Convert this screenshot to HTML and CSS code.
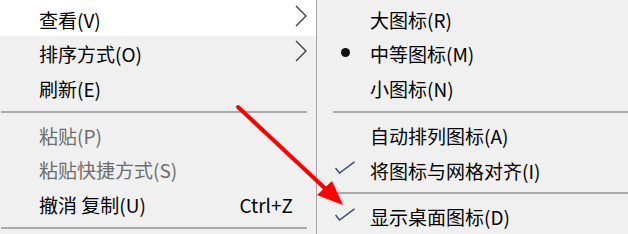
FILE: index.html
```html
<!DOCTYPE html>
<html lang="zh-CN">
<head>
<meta charset="utf-8">
<title>右键菜单</title>
<link rel="stylesheet" href="styles.css">
</head>
<body>
<div class="wrap">
  <div class="menu left">
    <div class="item first"><span class="label">查看(V)</span><svg class="chev" width="12" height="22" viewBox="0 0 12 22"><polyline points="1,1 11,11 1,21" fill="none" stroke="#3a3f4a" stroke-width="1.4"/></svg></div>
    <div class="item"><span class="label">排序方式(O)</span><svg class="chev" width="12" height="22" viewBox="0 0 12 22"><polyline points="1,1 11,11 1,21" fill="none" stroke="#3a3f4a" stroke-width="1.4"/></svg></div>
    <div class="item"><span class="label">刷新(E)</span></div>
    <div class="sep"></div>
    <div class="item disabled"><span class="label">粘贴(P)</span></div>
    <div class="item disabled"><span class="label">粘贴快捷方式(S)</span></div>
    <div class="item"><span class="label">撤消 复制(U)</span><span class="key">Ctrl+Z</span></div>
    <div class="sep"></div>
  </div>
  <div class="menu right">
    <div class="item first"><span class="mark"></span><span class="label">大图标(R)</span></div>
    <div class="item"><span class="mark"><span class="dot"></span></span><span class="label">中等图标(M)</span></div>
    <div class="item"><span class="mark"></span><span class="label">小图标(N)</span></div>
    <div class="sep"></div>
    <div class="item"><span class="mark"></span><span class="label">自动排列图标(A)</span></div>
    <div class="item"><span class="mark"><svg class="check" width="20" height="13" viewBox="0 0 20 13"><polyline points="0.5,7 4.5,12 19.5,0.8" fill="none" stroke="#3c4f6c" stroke-width="1.5"/></svg></span><span class="label">将图标与网格对齐(I)</span></div>
    <div class="sep short"></div>
    <div class="item"><span class="mark"><svg class="check" width="20" height="13" viewBox="0 0 20 13"><polyline points="0.5,7 4.5,12 19.5,0.8" fill="none" stroke="#3c4f6c" stroke-width="1.5"/></svg></span><span class="label">显示桌面图标(D)</span></div>
  </div>
</div>
<svg class="annot" width="628" height="234" viewBox="0 0 628 234">
  <line x1="238" y1="107" x2="330" y2="193" stroke="#ff0000" stroke-width="4" stroke-linecap="round"/>
  <polygon points="343,205 317,195 332,181" fill="#ff0000"/>
</svg>
</body>
</html>
```
FILE: styles.css
```css
html, body {
  margin: 0;
  padding: 0;
}
body {
  width: 628px;
  height: 234px;
  overflow: hidden;
  background: #f0f0f0;
  font-family: "Noto Sans CJK SC", "Noto Sans", sans-serif;
  font-size: 19px;
  color: #000;
  position: relative;
}
.wrap {
  display: flex;
  height: 234px;
}
.menu {
  display: flex;
  flex-direction: column;
  background: #f0f0f0;
}
.left {
  box-sizing: border-box;
  width: 317px;
  border-right: 1px solid #a3a3a3;
}
.right {
  flex: 1;
}
.item {
  height: 35px;
  display: flex;
  align-items: center;
  white-space: nowrap;
}
.left .item {
  padding-left: 39px;
}
.item.first {
  height: 37px;
  padding-top: 2px;
  box-sizing: border-box;
}
.left .item.first {
  background: #ffffff;
}
.disabled {
  color: #6d6d6d;
}
.chev {
  margin-left: auto;
  margin-right: 9px;
  margin-bottom: 6px;
}
.key {
  margin-left: auto;
  margin-right: 23px;
}
.sep {
  height: 13px;
  display: flex;
  align-items: center;
}
.sep::after {
  content: "";
  flex: 1;
  height: 2px;
  background: #ababab;
}
.left .sep {
  margin-left: 1px;
  margin-right: 9px;
}
.right .sep {
  margin-left: 16px;
}
.right .sep.short {
  height: 12px;
}
.mark {
  width: 20px;
  margin-left: 18px;
  margin-right: 15px;
  display: flex;
  justify-content: center;
  align-items: center;
}
.dot {
  width: 9px;
  height: 9px;
  border-radius: 50%;
  background: #111;
  margin-bottom: 2px;
}
.check {
  margin-bottom: 5px;
}
.annot {
  position: absolute;
  left: 0;
  top: 0;
  pointer-events: none;
}
```
